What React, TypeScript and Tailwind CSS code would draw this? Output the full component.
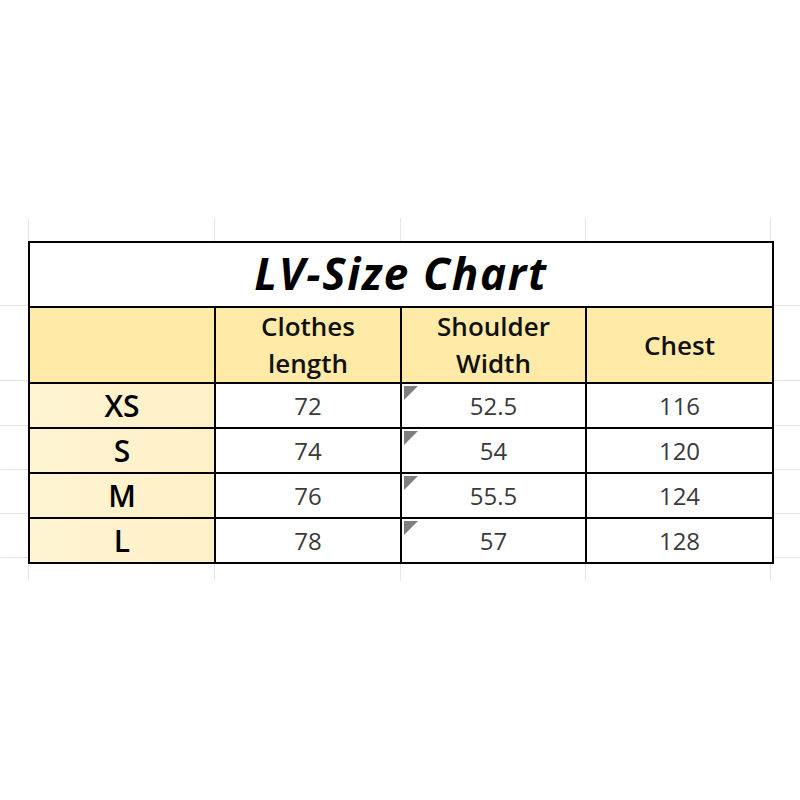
import React from "react";

type Row = { size: string; length: string; shoulder: string; chest: string };

const rows: Row[] = [
  { size: "XS", length: "72", shoulder: "52.5", chest: "116" },
  { size: "S", length: "74", shoulder: "54", chest: "120" },
  { size: "M", length: "76", shoulder: "55.5", chest: "124" },
  { size: "L", length: "78", shoulder: "57", chest: "128" },
];

const font = { fontFamily: '"Open Sans", "Noto Sans CJK KR", sans-serif' };

function Corner() {
  return (
    <span className="absolute left-[2px] top-[2px] h-0 w-0 border-l-[7px] border-t-[7px] border-r-[7px] border-b-[7px] border-l-[#7f7f7f] border-t-[#7f7f7f] border-r-transparent border-b-transparent" />
  );
}

function SheetMargin({ className }: { className: string }) {
  return (
    <div className={`flex flex-col ${className}`}>
      <div className="h-[65px] border-b border-[#e6e6e6]" />
      <div className="h-[75px] border-b border-[#e6e6e6]" />
      <div className="h-[45px] border-b border-[#e6e6e6]" />
      <div className="h-[44px] border-b border-[#e6e6e6]" />
      <div className="h-[44px] border-b border-[#e6e6e6]" />
      <div className="h-[44px] border-b border-[#e6e6e6]" />
    </div>
  );
}

function SheetStrip({ height }: { height: string }) {
  return (
    <div className={`flex ${height}`}>
      <div className="w-[28px]" />
      <div className="w-[186px] border-l border-[#e6e6e6]" />
      <div className="w-[186px] border-l border-[#e6e6e6]" />
      <div className="w-[185px] border-l border-[#e6e6e6]" />
      <div className="w-[186px] border-l border-r border-[#e6e6e6]" />
    </div>
  );
}

export default function App() {
  return (
    <div className="h-[800px] w-[800px] bg-white pt-[218px]" style={font}>
      <SheetStrip height="h-[23px]" />

      <div className="flex">
        <SheetMargin className="w-[28px]" />

        <table className="w-[744px] table-fixed border-collapse border-2 border-black">
          <colgroup>
            <col className="w-[186px]" />
            <col className="w-[186px]" />
            <col className="w-[185px]" />
            <col className="w-[187px]" />
          </colgroup>
          <tbody>
            <tr className="h-[65px]">
              <td colSpan={4} className="border-2 border-black p-0 text-center leading-[52px]">
                <span className="relative top-[4px] text-[44px] font-bold italic tracking-[1.7px] text-black">LV-Size Chart</span>
              </td>
            </tr>
            <tr className="h-[72px] bg-[#ffeaa7] text-[26px] font-semibold leading-[37px] text-[#111]">
              <td className="border-2 border-black p-0" />
              <td className="border-2 border-black p-0 text-center">Clothes<br />length</td>
              <td className="border-2 border-black p-0 text-center">Shoulder<br />Width</td>
              <td className="border-2 border-black p-0 text-center">Chest</td>
            </tr>
            {rows.map((row) => (
              <tr key={row.size} className="h-[45px] leading-[34px]">
                <td className="border-2 border-black bg-gradient-to-r from-[#fff4d3] to-[#fef0c6] p-0 text-center text-[30px] font-semibold text-black">{row.size}</td>
                <td className="border-2 border-black p-0 text-center text-[24px] text-[#3a3a3a]">{row.length}</td>
                <td className="relative border-2 border-black p-0 text-center text-[24px] text-[#3a3a3a]">
                  <Corner />
                  {row.shoulder}
                </td>
                <td className="border-2 border-black p-0 text-center text-[24px] text-[#3a3a3a]">{row.chest}</td>
              </tr>
            ))}
          </tbody>
        </table>

        <SheetMargin className="flex-1" />
      </div>

      <SheetStrip height="h-[17px]" />
    </div>
  );
}
